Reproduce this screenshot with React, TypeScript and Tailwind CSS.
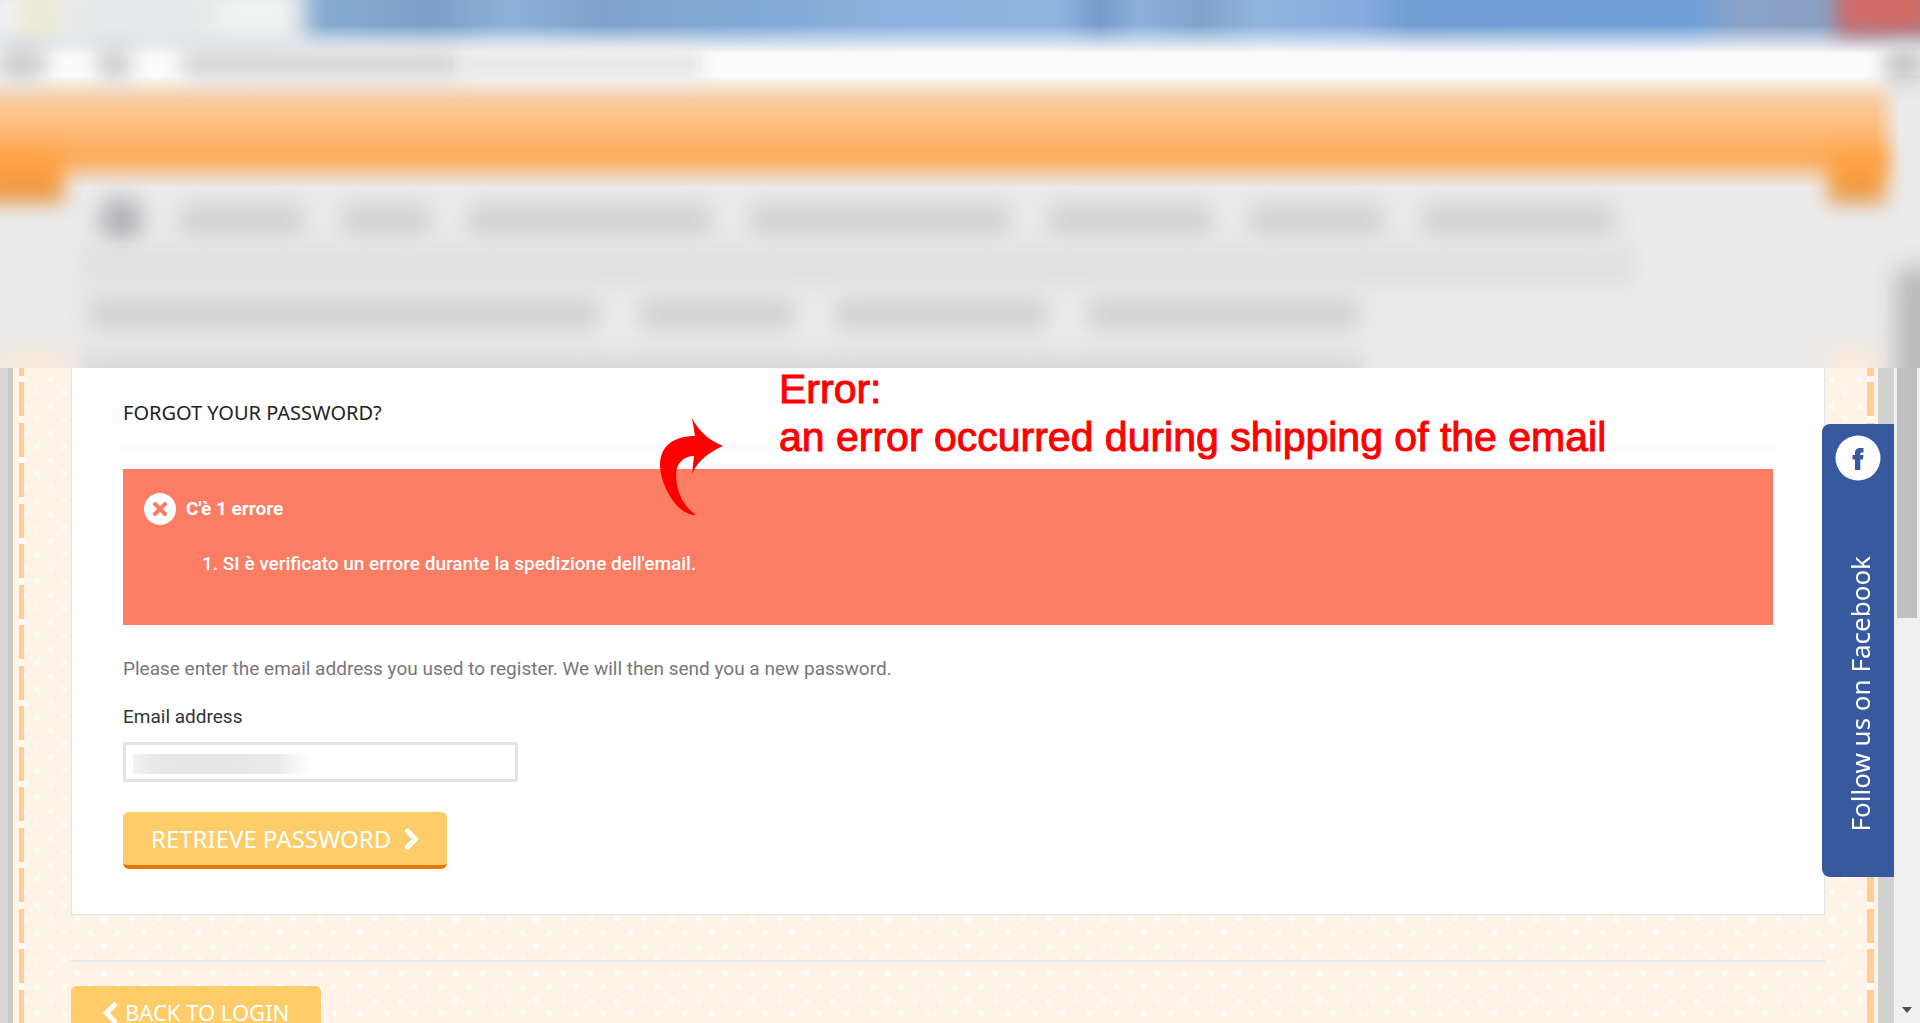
import React from 'react';

const DASHES =
    'shrink-0 bg-[linear-gradient(to_bottom,#ffcc96_0px_34px,#fffaf4_34px_41px,#ffcc96_41px_75px,#fffaf4_75px_81px)] bg-[length:100%_81px] bg-[position:0_14px]';

const navRowOne = ['w-[124px]', 'w-[88px]', 'w-[244px]', 'w-[260px]', 'w-[164px]', 'w-[134px]', 'w-[192px]'];
const navRowTwo = ['w-[508px]', 'w-[154px]', 'w-[210px]', 'w-[270px]'];

const ChevronIcon: React.FC<{ left?: boolean }> = ({ left }) => (
    <svg viewBox="0 0 14 22" className="w-[14px] h-[22px] shrink-0" fill="none" stroke="white" strokeWidth="5" strokeLinecap="round" aria-hidden="true">
        <path d={left ? 'M11.5 3 L3.5 11 L11.5 19' : 'M2.5 3 L10.5 11 L2.5 19'} />
    </svg>
);

// Browser chrome and shop navigation, blurred out
const BlurredHeader: React.FC = () => (
    <header aria-hidden="true" className="relative shrink-0 h-[368px] overflow-hidden bg-[#ebebeb]">
        <div className="relative z-10 h-[75px] bg-[linear-gradient(to_bottom,transparent_25px,#fcfcfc_54px),linear-gradient(to_right,#85aacf_340px,#7b9fc6_430px,#8fb1d8_510px,#7ea2cd_600px,#82aad6_760px,#8eb2df_900px,#8eb3df_1060px,#779ccb_1100px,#8db1dd_1140px,#7fa3cc_1200px,#8fb4de_1260px,#88abe0_1360px,#719dd3_1410px,#70a0d8_1690px,#8aa2c8_1740px,#889bbd_100%)]">
            <div className="flex justify-between h-10">
                <div className="flex -ml-5 -mt-5 w-[325px] h-[70px] pt-5 bg-[#f0f1f1] blur-md">
                    <div className="ml-[44px] w-8 h-8 bg-[#ebe5c4]" />
                    <div className="ml-2 w-[150px] h-8 bg-[#e4e6e7]" />
                </div>
                <div className="-mr-3 -mt-5 w-[95px] h-[54px] bg-[#cf6a64] blur-[10px]" />
            </div>
            <div className="flex h-12 items-center">
                <div className="-ml-1 w-[52px] h-9 rounded-full bg-[#cecece] blur-[10px]" />
                <div className="ml-[48px] w-[36px] h-9 rounded-full bg-[#cecece] blur-[10px]" />
                <div className="ml-[50px] w-[280px] h-7 bg-[#d4d3d4] blur-[10px]" />
                <div className="w-[240px] h-7 bg-[#e5e4e4] blur-[10px]" />
                <div className="ml-auto -mr-2 w-[46px] h-9 rounded-full bg-[#c6c6c6] blur-[10px]" />
            </div>
        </div>
        <div className="h-[112px] bg-[linear-gradient(to_bottom,#fcfcfc,#f5cda3_24px,#fcc68e_36px,#fdae61_76px,#fab168_86px,#f3cfae_100px,#ebebeb_100%)] [mask-image:linear-gradient(to_left,transparent_20px,black_44px)]" />
        <div className="flex justify-between -mt-10 h-10">
            <div className="-ml-5 w-[84px] h-14 bg-[linear-gradient(to_bottom,#ffa850,#fd9d3c_50%,#e0964c)] blur-[10px]" />
            <div className="mr-[34px] w-[58px] h-14 bg-[linear-gradient(to_bottom,#ffa850,#fd9d3c_50%,#e0964c)] blur-[10px]" />
        </div>
        <div className="flex items-center gap-[38px] h-[58px] pl-[100px] pt-2 blur-[11px]">
            <div className="w-[42px] h-[46px] rounded-full bg-[#b0b0b6]" />
            {navRowOne.map((width, index) => (
                <div key={index} className={`${width} h-8 bg-[#d1d1d1]`} />
            ))}
        </div>
        <div className="ml-[80px] w-[1555px] h-[40px] bg-[#e0e0e0] blur-[10px]" />
        <div className="flex items-center gap-[42px] h-[58px] pl-[90px] blur-[11px]">
            {navRowTwo.map((width, index) => (
                <div key={index} className={`${width} h-8 bg-[#d1d1d1]`} />
            ))}
        </div>
        <div className="ml-[80px] mt-3 w-[1285px] h-14 bg-[#d8d8d8] blur-[10px]" />
        <div className="absolute left-0 top-[350px] w-[68px] h-14 bg-[#fbeadb] blur-[14px]" />
        <div className="absolute right-[42px] top-[348px] w-[52px] h-14 bg-[#fdebdc] blur-[14px]" />
        <div className="absolute -right-5 top-[268px] w-[44px] h-[150px] bg-[#b8b8b8] blur-[12px]" />
    </header>
);

const Annotation: React.FC = () => (
    <>
        <svg viewBox="0 0 64 100" className="absolute left-[659px] top-[50px] w-16 h-[100px]" fill="#ff0000" aria-hidden="true">
            <path d="M33 0 C39 12 49 22 64 28 C51 34 39 42 33 56 L35 38 C24 38 17 46 17 57 C17 73 24 88 37 97 C18 98 1 66 1 47 C1 27 16 18 36 18 Z" />
        </svg>
        <p className="absolute left-[779px] top-[-3px] whitespace-nowrap font-['Liberation_Sans',Arial,sans-serif] text-[41px] leading-[48px] text-[#ff0000] [-webkit-text-stroke:1px_#ff0000]">
            Error:
            <br />
            an error occurred during shipping of the email
        </p>
    </>
);

const FacebookTab: React.FC = () => (
    <a
        href="#facebook"
        className="absolute right-[26px] top-[56px] flex flex-col items-center w-[72px] h-[453px] pt-[11px] rounded-l-lg bg-[#39599f] text-white"
    >
        <svg viewBox="0 0 46 46" className="w-[46px] h-[46px] shrink-0" aria-hidden="true">
            <circle cx="23" cy="23" r="22.5" fill="white" />
            <path d="M20 35 V24.5 H17.5 V20 H20 V18 C20 14.5 22 13 25 13 H28.5 V17.5 H27 C25.5 17.5 25.3 18 25.3 19 V20 H28.5 L28 24.5 H25.3 V35 Z" fill="#39599f" />
        </svg>
        <span className="mt-[75px] ml-1 whitespace-nowrap rotate-180 [writing-mode:vertical-rl] font-['Noto_Sans',sans-serif] text-[26px] leading-8">
            Follow us on Facebook
        </span>
    </a>
);

const PasswordCard: React.FC = () => (
    <section className="h-[547px] px-[51px] pt-[29px] bg-white border border-t-0 border-[#dfe3e6]">
        <h1 className="h-[52px] border-b-2 border-[#f8f8f8] font-['Noto_Sans',sans-serif] text-[20px] leading-8 text-[#222222]">
            FORGOT YOUR PASSWORD?
        </h1>
        <div role="alert" className="h-[156px] mt-5 px-[21px] pt-6 bg-[#fb7d64] text-white">
            <div className="flex items-center gap-[10px] h-8">
                <svg viewBox="0 0 32 32" className="w-8 h-8" aria-hidden="true">
                    <circle cx="16" cy="16" r="16" fill="white" />
                    <path d="M11 11 L21 21 M21 11 L11 21" stroke="#fb7d64" strokeWidth="4" strokeLinecap="round" />
                </svg>
                <strong className="text-[19px] font-bold">C'è 1 errore</strong>
            </div>
            <ol className="mt-[23px] pl-[58px] list-inside list-decimal text-[19px] leading-8 font-medium">
                <li>SI è verificato un errore durante la spedizione dell'email.</li>
            </ol>
        </div>
        <form onSubmit={(e) => e.preventDefault()}>
            <p className="mt-7 text-[19px] leading-8 text-[#777777]">
                Please enter the email address you used to register. We will then send you a new password.
            </p>
            <label htmlFor="email" className="block mt-4 text-[19px] leading-8 text-[#333333]">
                Email address
            </label>
            <div className="relative w-[395px] mt-[9px]">
                <input id="email" type="email" className="block w-full h-10 px-2 border-[3px] border-[#e4e4e4] bg-white outline-none" />
                <div className="absolute left-[10px] top-3 w-[180px] h-5 bg-[linear-gradient(to_right,#f3f3f3,#e8e8e8_20px,#e6e6e6_80px,#eaeaea_145px,#fdfdfd_175px)]" />
            </div>
            <button
                type="submit"
                className="flex items-center gap-[14px] h-[57px] mt-[30px] px-7 rounded-md border-b-4 border-[#ea7600] bg-[#fecc68] font-['Noto_Sans',sans-serif] text-[24px] text-white"
            >
                RETRIEVE PASSWORD
                <ChevronIcon />
            </button>
        </form>
    </section>
);

const App: React.FC = () => {
    return (
        <div className="flex flex-col h-screen overflow-hidden font-['Roboto',sans-serif]">
            <BlurredHeader />
            <div className="relative flex flex-1 min-h-0 bg-[#d2d2d2]">
                <div className="w-2 shrink-0 bg-[#d8d7d5]" />
                <div className="w-[5px] shrink-0 bg-[#c9cbcb]" />
                <div className="flex flex-1 min-w-0 pl-[6px] pr-1 bg-[#fff3e8]">
                    <div className={`${DASHES} w-[5px]`} />
                    <main className="flex-1 min-w-0 pl-[47px] pr-[42px] bg-[radial-gradient(circle,#fffcf9_2px,transparent_4px),radial-gradient(circle,#fffcf9_2px,transparent_4px)] bg-[length:27px_27px] bg-[position:-1px_11px,13px_-2px]">
                        <PasswordCard />
                        <hr className="mt-[45px] border-t-2 border-[#e6e9eb]" />
                        <a
                            href="#login"
                            className="inline-flex items-center gap-2 h-[57px] mt-6 px-8 rounded-md border-b-4 border-[#ea7600] bg-[#fecc68] font-['Noto_Sans',sans-serif] text-[22px] text-white"
                        >
                            <ChevronIcon left />
                            BACK TO LOGIN
                        </a>
                    </main>
                    <div className={`${DASHES} w-[7px]`} />
                </div>
                <div className="w-4 shrink-0 bg-[#d2d2d2]" />
                <div className="flex flex-col justify-between items-center w-[26px] shrink-0 bg-[#f0f0f0]">
                    <div className="w-5 h-[250px] bg-[#c0c0c0]" />
                    <svg viewBox="0 0 10 6" className="w-[10px] h-[6px] mb-[10px]" fill="#505050" aria-hidden="true">
                        <path d="M0 0 H10 L5 6 Z" />
                    </svg>
                </div>
                <Annotation />
                <FacebookTab />
            </div>
        </div>
    );
};

export default App;
